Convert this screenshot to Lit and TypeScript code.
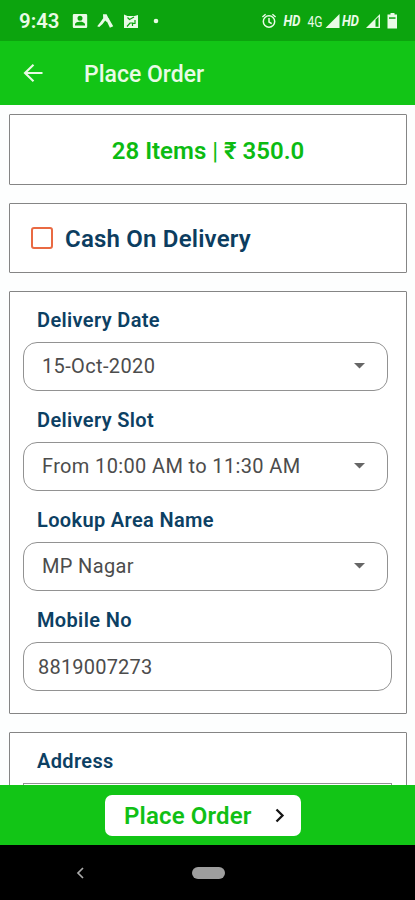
import { LitElement, html, css } from "lit";
import { customElement, property } from "lit/decorators.js";

@customElement("status-bar")
class StatusBar extends LitElement {
  static styles = css`
    :host { display: flex; height: 41px; background: #0ca40e; color: #e9fbe6; box-sizing: border-box; }
    svg { display: block; width: 415px; height: 41px; }
    text { font-family: Roboto, sans-serif; fill: #e9fbe6; }
    .time { font-size: 20.5px; font-weight: 600; }
    .hd { font-size: 14px; font-weight: 700; font-style: italic; }
    .net { font-size: 14.5px; }
  `;
  render() {
    return html`<svg viewBox="0 0 415 41" fill="#e9fbe6">
      <text class="time" x="19" y="28" textLength="40.5" lengthAdjust="spacingAndGlyphs">9:43</text>
      <path fill-rule="evenodd" d="M74 14h12q1.200 0 1.200 1.200v11.600q0 1.200-1.200 1.200h-12q-1.200 0-1.200-1.200v-11.600q0-1.200 1.200-1.200zM80 15.800a2.500 2.500 0 1 0 0 5 2.500 2.500 0 0 0 0-5zM75 25.500h10v-1.200c0-1.800-3-2.600-5-2.600s-5 .8-5 2.600z"/>
      <path d="M103 14.300h3.600l2 4.200-1.800 3.600-1.600-1.600-2.600 3.400-3.400 3.200-2-.9 2.800-3.400 3.200-4.500z"/>
      <path d="M105.500 18.500l3-.5 4.700 8.300-3.300 1.500z"/>
      <path d="M124 14.500l3.500 1.500h7l3.500-1V28h-14z"/>
      <path d="M127.500 17.500l2 2 4.500-2.500M127 26.500l3-3.500h3.500M135 20v3.500h-2.500v2.500" fill="none" stroke="#0ca40e" stroke-width="1.200"/>
      <circle cx="156" cy="21" r="2.300"/>
      <g fill="none" stroke="#e9fbe6" stroke-width="1.500">
        <circle cx="269" cy="21.500" r="5.700"/>
        <path d="M269 18v4l2.700 1.700M262.400 17l3.200-2.700M275.600 17l-3.200-2.700"/>
      </g>
      <text class="hd" x="283.500" y="25.700" textLength="17" lengthAdjust="spacingAndGlyphs">HD</text>
      <text class="net" x="307.500" y="26.500" textLength="15" lengthAdjust="spacingAndGlyphs">4G</text>
      <path d="M339.500 14V28H325.500z"/>
      <text class="hd" x="342" y="25.700" textLength="17" lengthAdjust="spacingAndGlyphs">HD</text>
      <path d="M380 14V28H366z"/>
      <path d="M375.500 19.800l3-3V26.800h-3z" fill="#0ca40e"/>
      <path d="M390.500 13h4v1.500h2.500v14h-9.500v-14h3z"/>
      <path d="M389 17.300h6.500v1.500H389z" fill="#0ca40e"/>
    </svg>`;
  }
}

@customElement("form-field")
class FormField extends LitElement {
  @property() label = "";
  @property() value = "";
  @property() kind = "input";
  static styles = css`
    :host { display: block; height: 100px; flex: none; }
    .label { height: 40px; line-height: 40px; padding-left: 14px; font-size: 20px; font-weight: 600; letter-spacing: 0.35px; color: #0c4063; white-space: nowrap; }
    .control { display: flex; align-items: center; justify-content: space-between; box-sizing: border-box;
      width: 369px; height: 49px; margin-top: 2px; border: 1.5px solid #929292; border-radius: 14px; padding: 1px 13px 0 14px; font-size: 20px; letter-spacing: 0.2px; color: #4c4c4c; }
    .select { width: 365px; padding: 0 22px 2px 18px; letter-spacing: 0.36px; }
    .area { border-radius: 0; }
    .arrow { width: 11px; height: 6px; display: block; }
  `;
  render() {
    return html`<div class="label">${this.label}</div>
      <div class="control ${this.kind}">
        <span>${this.value}</span>
        ${this.kind === "select" ? html`<svg class="arrow" viewBox="0 0 11 6"><path d="M0 0h11L5.500 5.500z" fill="#666"/></svg>` : null}
      </div>`;
  }
}

@customElement("app-root")
class AppRoot extends LitElement {
  static styles = css`
    :host { display: flex; flex-direction: column; width: 415px; height: 900px; overflow: hidden; background: #fdfefe; font-family: Roboto, sans-serif; }
    .appbar { flex: none; height: 64px; background: #12c516; display: flex; align-items: center; padding-left: 23px; color: #e9fbe6; box-sizing: border-box; }
    .back { width: 20px; height: 20px; margin-right: 41px; }
    .title { font-size: 23px; font-weight: 500; padding-top: 2px; }
    .content { flex: 1; min-height: 0; overflow: hidden; display: flex; flex-direction: column; gap: 18px; padding: 9px 8px 0 9px; }
    .card { flex: none; box-sizing: border-box; border: 1.5px solid #858585; background: #fff; border-radius: 1px; }
    .summary, .cod { display: flex; align-items: center; white-space: nowrap; font-weight: 600; }
    .summary { height: 71px; justify-content: center; color: #0cbb12; font-size: 24px; padding-top: 2px; }
    .bar { font-weight: 400; }
    .cod { height: 70px; color: #0c3d60; font-size: 24px; letter-spacing: 0.2px; padding: 1px 0 0 21px; gap: 12px; }
    .box { box-sizing: border-box; width: 22px; height: 22px; border: 2.5px solid #e96a43; border-radius: 3px; margin-top: -2px; }
    .form { height: 423px; padding: 8px 0 0 13px; }
    .address { height: 160px; padding: 8px 0 0 13px; }
    .footer { flex: none; height: 60px; background: #12c516; display: flex; justify-content: center; padding-top: 10px; box-sizing: border-box; }
    .button { width: 196px; height: 41px; margin-right: 9px; background: #fff; border-radius: 7px; display: flex; align-items: center; box-sizing: border-box; padding-left: 19px; gap: 23px; color: #10c015; font-size: 24px; font-weight: 600; letter-spacing: 0.15px; white-space: nowrap; }
    .chevron { width: 10px; height: 15px; }
    .nav { flex: none; height: 55px; background: #000; display: flex; align-items: center; padding-left: 76px; box-sizing: border-box; }
    .navback { width: 8px; height: 12px; margin-right: 108px; }
    .pill { width: 33px; height: 12px; border-radius: 6px; background: #9e9e9e; }
  `;
  render() {
    return html`
      <status-bar></status-bar>
      <div class="appbar">
        <svg class="back" viewBox="0 0 20 20" fill="none" stroke="#e9fbe6" stroke-width="2.100"><path d="M19.500 10H2M10.500 1.700L2 10l8.500 8.300"/></svg>
        <span class="title">Place Order</span>
      </div>
      <div class="content">
        <div class="card summary"><span>28 Items <span class="bar">|</span> ₹ 350.0</span></div>
        <div class="card cod"><span class="box"></span><span>Cash On Delivery</span></div>
        <div class="card form">
          <form-field label="Delivery Date" value="15-Oct-2020" kind="select"></form-field>
          <form-field label="Delivery Slot" value="From 10:00 AM to 11:30 AM" kind="select"></form-field>
          <form-field label="Lookup Area Name" value="MP Nagar" kind="select"></form-field>
          <form-field label="Mobile No" value="8819007273"></form-field>
        </div>
        <div class="card address"><form-field label="Address" kind="area"></form-field></div>
      </div>
      <div class="footer">
        <div class="button"><span>Place Order</span>
          <svg class="chevron" viewBox="0 0 10 15" fill="none" stroke="#151515" stroke-width="2.300"><path d="M1.500 1.500l6 6-6 6"/></svg>
        </div>
      </div>
      <div class="nav">
        <svg class="navback" viewBox="0 0 8 12" fill="none" stroke="#aaa" stroke-width="1.700"><path d="M7 1L2 6l5 5"/></svg>
        <span class="pill"></span>
      </div>`;
  }
}
